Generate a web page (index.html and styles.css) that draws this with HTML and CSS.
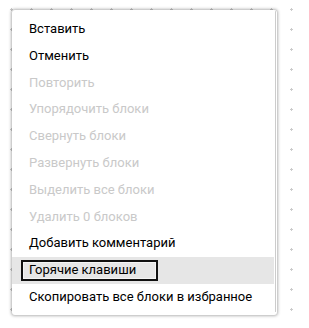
FILE: index.html
```html
<!DOCTYPE html>
<html lang="ru">
<head>
    <meta charset="UTF-8">
    <title>Context menu</title>
    <link rel="stylesheet" href="styles.css">
</head>
<body>
<div class="workspace">
    <svg class="workspace_grid" width="309" height="328">
        <defs>
            <pattern id="gridPattern" patternUnits="userSpaceOnUse" width="20" height="20">
                <rect x="10" y="9" width="3" height="1" fill="#ccc"/>
                <rect x="11" y="8" width="1" height="3" fill="#ccc"/>
            </pattern>
        </defs>
        <rect width="100%" height="100%" fill="url(#gridPattern)"/>
    </svg>

    <div class="menu">
        <ul class="menu_list">
            <li class="menu_item"><span class="menu_label">Вставить</span></li>
            <li class="menu_item"><span class="menu_label">Отменить</span></li>
            <li class="menu_item disabled"><span class="menu_label">Повторить</span></li>
            <li class="menu_item disabled"><span class="menu_label">Упорядочить блоки</span></li>
            <li class="menu_item disabled"><span class="menu_label">Свернуть блоки</span></li>
            <li class="menu_item disabled"><span class="menu_label">Развернуть блоки</span></li>
            <li class="menu_item disabled"><span class="menu_label">Выделить все блоки</span></li>
            <li class="menu_item disabled"><span class="menu_label">Удалить 0 блоков</span></li>
            <li class="menu_item"><span class="menu_label">Добавить комментарий</span></li>
            <li class="menu_item highlight"><span class="menu_label focused">Горячие клавиши</span></li>
            <li class="menu_item"><span class="menu_label">Скопировать все блоки в избранное</span></li>
        </ul>
        <div class="menu_scroll">
            <span class="menu_thumb"></span>
        </div>
    </div>
</div>
</body>
</html>
```

FILE: styles.css
```css
* {
    padding: 0;
    margin: 0;
    box-sizing: border-box;
}
ul, li {
    list-style: none;
}
body {
    background: #fff;
    font-family: Roboto, "Liberation Sans", Arial, sans-serif;
}
.workspace {
    position: relative;
    width: 309px;
    height: 328px;
    overflow: hidden;
}
.workspace_grid {
    display: block;
}
.menu {
    position: absolute;
    left: 12px;
    top: 10px;
    width: 265px;
    height: 305px;
    display: flex;
    background: #fff;
    border-radius: 3px;
    box-shadow: 0 0 3px 1px rgba(0, 0, 0, .3);
    overflow: hidden;
}
.menu_list {
    flex: 1;
    padding: 6px 0 4px;
}
.menu_item {
    padding: 3px 0 3px 9px;
    font-size: 13px;
    line-height: 14.8px;
    color: #000;
    white-space: nowrap;
}
.menu_item.disabled {
    color: #c9c9c9;
}
.menu_item.highlight {
    background: #e6e6e6;
}
.menu_label {
    display: inline-block;
    padding: 1px 20px 1px 6px;
    border: 2px solid transparent;
}
.menu_label.focused {
    border-color: #101010;
    box-shadow: inset 0 0 0 1px #f4f4f4;
}
.menu_scroll {
    width: 11px;
    padding: 1px 1px 3px 1px;
    display: flex;
}
.menu_thumb {
    flex: 1;
    background: #ccc;
    border-radius: 5px;
}
```
